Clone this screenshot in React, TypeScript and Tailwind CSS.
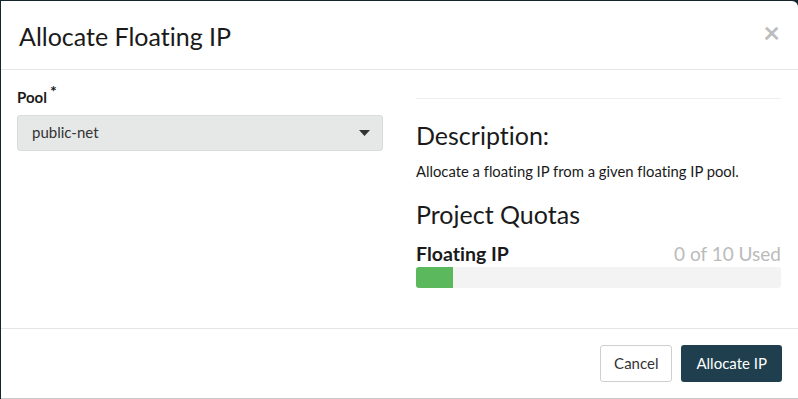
export default function App() {
  return (
    <div className="h-[399px] w-[798px] overflow-hidden bg-[#13262d] pl-px pt-px font-['Lato',sans-serif] [font-variant-ligatures:none]">
      <div className="flex h-[398px] flex-col rounded-tr-[6px] border-b border-[#c8c8c8] bg-white text-[#1a1a1a]">
        {/* header */}
        <div className="flex h-[69px] shrink-0 items-start justify-between border-b border-[#e5e5e5] pl-[18px] pr-[18px] pt-[19px]">
          <h4 className="text-[25px] leading-[32px]">Allocate Floating IP</h4>
          <button type="button" className="mt-[-3px] text-[29px] font-bold leading-none text-[#bdbdbd]">
            ×
          </button>
        </div>

        {/* body */}
        <div className="flex h-[258px] shrink-0 gap-[33px] px-[16px] pt-[16px]">
          <div className="w-[366px]">
            <label className="flex items-start text-[15px] font-bold">
              Pool
              <span className="ml-[3px] mt-[-3px] text-[16px] leading-[16px]">*</span>
            </label>
            <div className="mt-[6px] flex h-[36px] items-center justify-between rounded-[3px] border border-[#d9dcdc] bg-[#e6e8e8] pl-[14px] pr-[12px] text-[15px] text-[#333]">
              public-net
              <svg width="11" height="6" viewBox="0 0 11 6">
                <path d="M0 0h11L5.5 6z" fill="#333" />
              </svg>
            </div>
          </div>

          <div className="w-[365px] pt-[12px]">
            <div className="border-t border-[#eeeeee]" />
            <h3 className="mt-[21px] text-[25px] leading-[30px]">Description:</h3>
            <p className="mt-[11px] text-[14.8px] leading-[20px]">
              Allocate a floating IP from a given floating IP pool.
            </p>
            <h3 className="mt-[18px] text-[25px] leading-[30px]">Project Quotas</h3>
            <div className="mt-[13px] flex items-baseline justify-between leading-[24px]">
              <span className="text-[19.5px] font-bold">Floating IP</span>
              <span className="text-[19px] text-[#bbbbbb]">0 of 10 Used</span>
            </div>
            <div className="mt-[1px] h-[21px] overflow-hidden rounded-[3px] bg-[#f3f3f3]">
              <div className="h-full bg-[#5cb85c]" style={{ width: "10%" }} />
            </div>
          </div>
        </div>

        {/* footer */}
        <div className="flex flex-1 items-start justify-end gap-[9px] border-t border-[#e5e5e5] pr-[16px] pt-[16px]">
          <button
            type="button"
            className="h-[37px] rounded-[3px] border border-[#cfcfcf] bg-white px-[13px] text-[15px] text-[#333]"
          >
            Cancel
          </button>
          <button
            type="button"
            className="h-[37px] rounded-[3px] bg-[#1f3f4e] px-[15px] text-[15px] text-white"
          >
            Allocate IP
          </button>
        </div>
      </div>
    </div>
  );
}
